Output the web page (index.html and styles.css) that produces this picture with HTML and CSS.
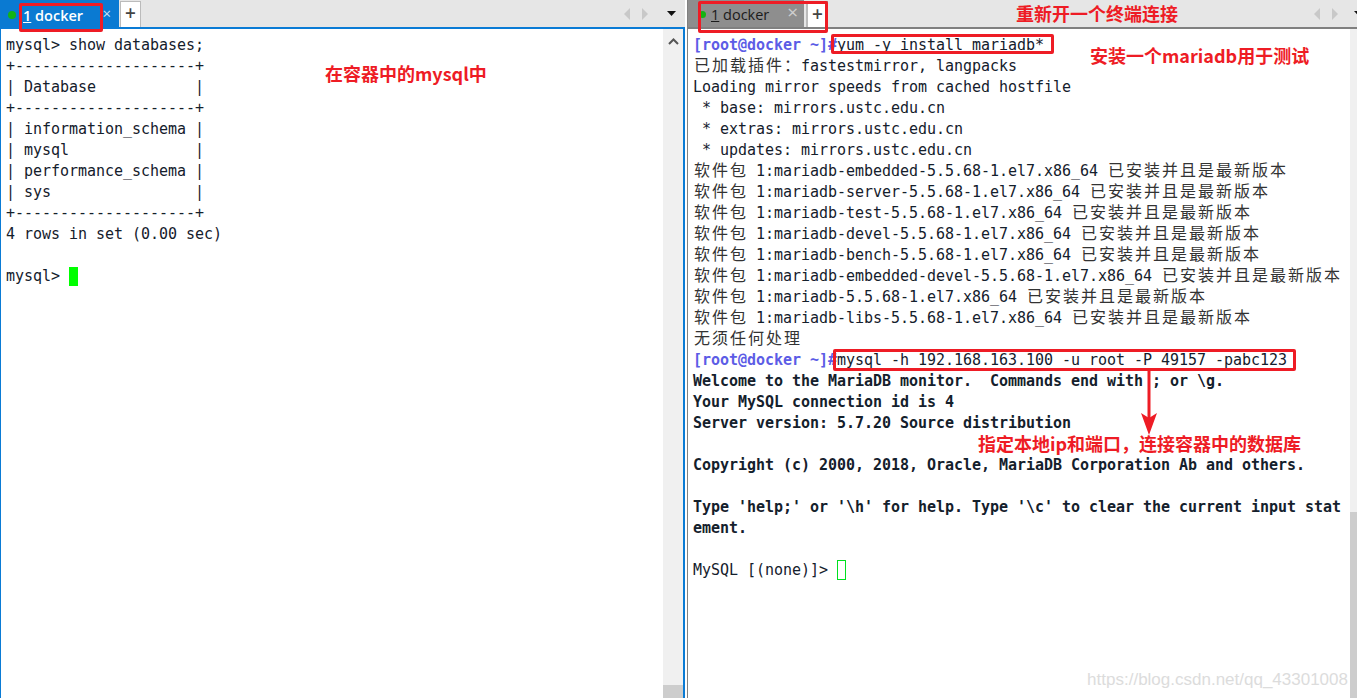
FILE: index.html
```html
<!DOCTYPE html>
<html lang="zh">
<head>
<meta charset="utf-8">
<title>docker</title>
<link rel="stylesheet" href="styles.css">
</head>
<body>
<div class="app">
  <section class="pane pane-left">
    <header class="tabbar">
      <div class="tab tab-active">
        <span class="dot"></span>
        <span class="tab-label"><u>1</u> docker</span>
        <span class="tab-close">×</span>
      </div>
      <div class="tab-add">+</div>
      <div class="tab-nav">
        <svg class="nav-arrows" width="25" height="12" viewBox="0 0 25 12"><path d="M6 0v12L0 6z" fill="#c8c8c8"/><path d="M18 0v12l6-6z" fill="#c8c8c8"/></svg>
        <svg class="nav-menu" width="9" height="5" viewBox="0 0 9 5"><path d="M0 0h9L4.500 5z" fill="#111"/></svg>
      </div>
    </header>
    <div class="body">
      <pre class="term"><div>mysql&gt; show databases;</div><div>+--------------------+</div><div>| Database           |</div><div>+--------------------+</div><div>| information_schema |</div><div>| mysql              |</div><div>| performance_schema |</div><div>| sys                |</div><div>+--------------------+</div><div>4 rows in set (0.00 sec)</div><div> </div><div>mysql&gt; <span class="cursor-solid"></span></div></pre>
      <aside class="scroll scroll-left">
        <svg class="scroll-up" width="11" height="7" viewBox="0 0 11 7"><path d="M1 6l4.500-4.500L10 6" fill="none" stroke="#555" stroke-width="2"/></svg>
        <div class="thumb thumb-left"></div>
      </aside>
    </div>
  </section>
  <section class="pane pane-right">
    <header class="tabbar">
      <div class="tab tab-idle">
        <span class="dot"></span>
        <span class="tab-label"><u>1</u> docker</span>
        <span class="tab-close">×</span>
      </div>
      <div class="tab-add">+</div>
      <div class="tab-nav">
        <svg class="nav-arrows" width="25" height="12" viewBox="0 0 25 12"><path d="M6 0v12L0 6z" fill="#c8c8c8"/><path d="M18 0v12l6-6z" fill="#c8c8c8"/></svg>
        <svg class="nav-menu" width="9" height="5" viewBox="0 0 9 5"><path d="M0 0h9L4.500 5z" fill="#111"/></svg>
      </div>
    </header>
    <div class="body">
      <pre class="term"><div><b class="prompt">[root@docker ~]#</b>yum -y install mariadb*</div><div><span class="c">已加载插件：</span>fastestmirror, langpacks</div><div>Loading mirror speeds from cached hostfile</div><div> * base: mirrors.ustc.edu.cn</div><div> * extras: mirrors.ustc.edu.cn</div><div> * updates: mirrors.ustc.edu.cn</div><div><span class="c">软件包</span> 1:mariadb-embedded-5.5.68-1.el7.x86_64 <span class="c">已安装并且是最新版本</span></div><div><span class="c">软件包</span> 1:mariadb-server-5.5.68-1.el7.x86_64 <span class="c">已安装并且是最新版本</span></div><div><span class="c">软件包</span> 1:mariadb-test-5.5.68-1.el7.x86_64 <span class="c">已安装并且是最新版本</span></div><div><span class="c">软件包</span> 1:mariadb-devel-5.5.68-1.el7.x86_64 <span class="c">已安装并且是最新版本</span></div><div><span class="c">软件包</span> 1:mariadb-bench-5.5.68-1.el7.x86_64 <span class="c">已安装并且是最新版本</span></div><div><span class="c">软件包</span> 1:mariadb-embedded-devel-5.5.68-1.el7.x86_64 <span class="c">已安装并且是最新版本</span></div><div><span class="c">软件包</span> 1:mariadb-5.5.68-1.el7.x86_64 <span class="c">已安装并且是最新版本</span></div><div><span class="c">软件包</span> 1:mariadb-libs-5.5.68-1.el7.x86_64 <span class="c">已安装并且是最新版本</span></div><div><span class="c">无须任何处理</span></div><div><b class="prompt">[root@docker ~]#</b>mysql -h 192.168.163.100 -u root -P 49157 -pabc123</div><div class="strong">Welcome to the MariaDB monitor.  Commands end with ; or \g.</div><div class="strong">Your MySQL connection id is 4</div><div class="strong">Server version: 5.7.20 Source distribution</div><div> </div><div class="strong">Copyright (c) 2000, 2018, Oracle, MariaDB Corporation Ab and others.</div><div> </div><div class="strong">Type 'help;' or '\h' for help. Type '\c' to clear the current input stat</div><div class="strong">ement.</div><div> </div><div>MySQL [(none)]&gt; <span class="cursor-hollow"></span></div></pre>
      <aside class="scroll scroll-right">
        <div class="thumb thumb-right"></div>
      </aside>
    </div>
  </section>
</div>

<div class="box box-tab-left"></div>
<div class="box box-tab-right"></div>
<div class="box box-yum"></div>
<div class="box box-mysql"></div>
<svg class="arrow" width="22" height="66" viewBox="0 0 22 66"><path d="M11 0v50" stroke="#ee1c25" stroke-width="3"/><path d="M3 43l8 5 8-5-8 22z" fill="#ee1c25"/></svg>
<div class="note note-reopen">重新开一个终端连接</div>
<div class="note note-install">安装一个mariadb用于测试</div>
<div class="note note-inside">在容器中的mysql中</div>
<div class="note note-port">指定本地ip和端口，连接容器中的数据库</div>
<div class="watermark">https://blog.csdn.net/qq_43301008</div>
</body>
</html>
```
FILE: styles.css
```css
* { box-sizing: border-box; }
html, body { margin: 0; height: 100%; overflow: hidden; background: #fff; }
.app { display: flex; height: 698px; width: 1357px; background: #fff; }
.pane { display: flex; flex-direction: column; min-width: 0; }
.pane-left { width: 685px; }
.pane-right { width: 669px; flex: 1; margin-left: 2px; border-left: 1px solid #808080; position: relative; }
.tabbar { display: flex; height: 29px; background: #e6e6e6; align-items: flex-start; flex: none; }
.pane-left .tabbar { border-bottom: 2px solid #0a7bd5; }
.pane-right .tabbar { border-bottom: 2px solid #808080; }
.tab { height: 27px; width: 119px; display: flex; align-items: center; position: relative; font: 14.5px/27px "Open Sans", "Noto Sans", sans-serif; padding-top: 3px; }
.tab-active { background: #0a7ad2; color: #fff; font-weight: 600; }
.tab-idle { width: 116px; background: #8e8e8e; color: #1b1b1b; padding-top: 2px; }
.dot { width: 8px; height: 8px; border-radius: 50%; background: #14b414; margin-left: 8px; flex: none; }
.tab-idle .dot { margin-left: 11px; width: 7px; height: 7px; }
.tab-label { margin-left: 7px; white-space: pre; }
.tab-idle .tab-label { margin-left: 5px; }
.tab-close { position: absolute; right: 8px; top: 0; font-size: 15px; font-weight: 400; color: #d8d8d8; }
.tab-active .tab-close { right: 8px; color: #c8dff2; }
.tab-idle .tab-close { right: 6px; top: -1px; color: #cfcfcf; font-size: 19px; }
.tab-add { width: 21px; height: 26px; margin: 1px 0 0 1px; background: #fff; border: 1px solid #bbb; border-bottom: 0; text-align: center; font: 600 19px/23px "Open Sans", sans-serif; color: #444; flex: none; }
.pane-right .tab-add { margin-left: 2px; width: 22px; border-color: #999; border-left: 2px solid #bbb; line-height: 25px; }
.tab-nav { margin-left: auto; display: flex; align-items: center; height: 27px; flex: none; }
.pane-left .tab-nav { padding-right: 9px; }
.pane-left .nav-menu { margin-left: 18px; }
.pane-right .tab-nav { margin-right: -6px; }
.pane-right .nav-menu { margin-left: 15px; }
.body { flex: 1; display: flex; min-height: 0; position: relative; }
.pane-left .body { border-left: 1px solid #0a7bd5; border-right: 2px solid #0a7bd5; }
.term { flex: 1; min-width: 0; margin: 0; padding: 6px 0 0 5px; overflow: hidden; font-family: "DejaVu Sans Mono", "Noto Sans CJK SC", monospace; font-size: 15px; letter-spacing: -0.03px; color: #14202c; white-space: pre; }
.term > div { height: 21px; line-height: 21px; }
.c { font-family: "Noto Sans CJK SC", sans-serif; font-size: 16px; letter-spacing: 2px; line-height: 0; margin: 0 -1px 0 1px; color: #333; }
.prompt { color: #5c5ce6; font-weight: 700; }
.strong { font-weight: 700; }
.cursor-solid { display: inline-block; width: 9px; height: 19px; background: #00ff00; vertical-align: -5px; }
.cursor-hollow { display: inline-block; width: 9px; height: 20px; border: 1px solid #00e020; vertical-align: -5px; }
.scroll { flex: none; position: relative; background: #f0f0f0; }
.scroll-left { width: 20px; }
.scroll-right { width: 7px; }
.scroll-up { position: absolute; left: 5px; top: 9px; }
.thumb { position: absolute; left: 0; right: 0; bottom: 0; background: #cdcdcd; }
.thumb-left { height: 13px; }
.thumb-right { height: 186px; }
.box { position: absolute; border: 3px solid #ee1c25; border-radius: 2px; }
.box-tab-left { left: 19px; top: 3px; width: 84px; height: 29px; }
.box-tab-right { left: 698px; top: 1px; width: 130px; height: 32px; }
.box-yum { left: 831px; top: 34px; width: 223px; height: 20px; }
.box-mysql { left: 833px; top: 349px; width: 463px; height: 22px; }
.arrow { position: absolute; left: 1138px; top: 370px; }
.note { position: absolute; color: #ee1c25; font: 700 18px/24px "Noto Sans CJK SC", sans-serif; white-space: nowrap; }
.note-reopen { left: 1016px; top: 1px; }
.note-install { left: 1090px; top: 43px; }
.note-inside { left: 325px; top: 61px; }
.note-port { left: 978px; top: 431px; }
.watermark { position: absolute; right: 9px; top: 669px; font: 17px/22px "Liberation Sans", sans-serif; color: #dcdcdc; white-space: nowrap; }
```
